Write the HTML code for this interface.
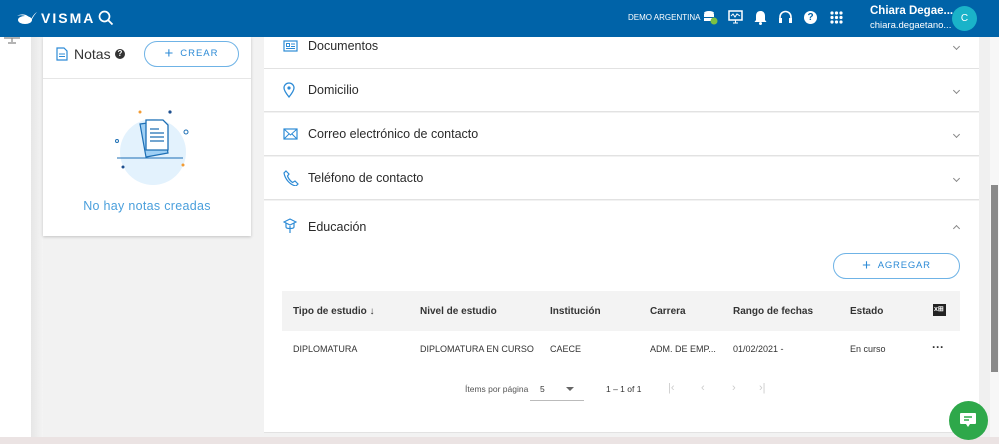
<!DOCTYPE html>
<html><head><meta charset="utf-8"><style>
*{box-sizing:border-box;margin:0;padding:0}
body{width:999px;height:444px;overflow:hidden;position:relative;background:#f2f2f2;font-family:"Liberation Sans",sans-serif;color:#252525}
.hdr{position:absolute;left:0;top:0;width:999px;height:37px;background:#0063a8;color:#fff;z-index:5}
.abs{position:absolute}
.card{position:absolute;background:#fff}
.row{position:absolute;left:264px;width:715px;height:43px;background:#fff;border-bottom:1px solid #e2e2e2}
.row .t{position:absolute;left:44px;font-size:12.5px;color:#2a2a2a}
.row .ic{position:absolute;left:19px}
.chev{position:absolute;right:20px;width:5px;height:5px;border-right:1px solid #888;border-bottom:1px solid #888;transform:rotate(45deg)}
.th{position:absolute;top:306px;font-size:10px;font-weight:bold;color:#333}
.td{position:absolute;top:344px;font-size:9px;color:#333}
.pg{position:absolute;top:382px;font-size:11px;color:#ccc}
</style></head><body>
<div class="abs" style="left:0;top:37px;width:31px;height:407px;background:#fff"></div>
<div class="abs" style="left:31px;top:37px;width:12px;height:407px;background:linear-gradient(90deg,#e6e6e6,#f4f4f4)"></div>
<svg class="abs" style="left:3px;top:37px" width="18" height="8"><path d="M1 1h16M9 1v4M5 6h8" stroke="#888" stroke-width="1.2" fill="none"/></svg>

<div class="hdr">
 <svg class="abs" style="left:16px;top:10px" width="22" height="16"><path d="M1 6c6-2 10 0 14 5 2-4 4-7 6-9-3 2-5 5-6 8C12 4 6 3 1 6z" fill="#fff"/><ellipse cx="9" cy="10" rx="7" ry="4" fill="#fff"/></svg>
 <div class="abs" style="left:41px;top:10px;font-size:14px;font-weight:bold;letter-spacing:2px">VISMA</div>
 <svg class="abs" style="left:98px;top:10px" width="16" height="16"><circle cx="6.5" cy="6.5" r="5" stroke="#fff" stroke-width="1.7" fill="none"/><path d="M10 10l4.5 4.5" stroke="#fff" stroke-width="1.8"/></svg>
 <div class="abs" style="left:628px;top:13px;font-size:8px">DEMO ARGENTINA</div>
 <svg class="abs" style="left:703px;top:10px" width="15" height="15"><ellipse cx="6" cy="3" rx="5" ry="2" fill="#fff"/><rect x="1" y="4" width="10" height="3" fill="#fff"/><rect x="1" y="8" width="10" height="3" fill="#fff"/><circle cx="11" cy="11" r="3.5" fill="#7cc142"/></svg>
 <svg class="abs" style="left:728px;top:10px" width="15" height="15"><rect x="1" y="1" width="13" height="9" stroke="#fff" stroke-width="1.5" fill="none"/><path d="M3 6l2-2 2 3 2-3 3 2M5 13h5M7.5 10v3" stroke="#fff" fill="none"/></svg>
 <svg class="abs" style="left:754px;top:10px" width="13" height="15"><path d="M6.5 1c3 0 4.5 2 4.5 5v4l1.5 2h-12L2 10V6c0-3 1.5-5 4.5-5z" fill="#fff"/><circle cx="6.5" cy="13.5" r="1.5" fill="#fff"/></svg>
 <svg class="abs" style="left:778px;top:10px" width="15" height="15"><path d="M2 9V7a5.5 5.5 0 0 1 11 0v2" stroke="#fff" stroke-width="1.6" fill="none"/><rect x="1" y="8" width="3" height="5" fill="#fff"/><rect x="11" y="8" width="3" height="5" fill="#fff"/></svg>
 <div class="abs" style="left:804px;top:11px;width:13px;height:13px;border-radius:50%;background:#fff;color:#0063a8;font-size:10px;font-weight:bold;text-align:center;line-height:13px">?</div>
 <svg class="abs" style="left:830px;top:11px" width="13" height="13"><g fill="#fff"><circle cx="2" cy="2" r="1.6"/><circle cx="6.5" cy="2" r="1.6"/><circle cx="11" cy="2" r="1.6"/><circle cx="2" cy="6.5" r="1.6"/><circle cx="6.5" cy="6.5" r="1.6"/><circle cx="11" cy="6.5" r="1.6"/><circle cx="2" cy="11" r="1.6"/><circle cx="6.5" cy="11" r="1.6"/><circle cx="11" cy="11" r="1.6"/></g></svg>
 <div class="abs" style="left:870px;top:5px;font-size:11.5px;font-weight:bold;white-space:nowrap">Chiara Degae...</div>
 <div class="abs" style="left:870px;top:20px;font-size:9.5px;white-space:nowrap">chiara.degaetano...</div>
 <div class="abs" style="left:952px;top:6px;width:25px;height:25px;border-radius:50%;background:#1ab3c9;font-size:10px;text-align:center;line-height:25px">C</div>
</div>

<div class="card" style="left:43px;top:37px;width:208px;height:199px;box-shadow:0 1px 3px rgba(0,0,0,.2)">
 <div class="abs" style="left:0;top:41px;width:208px;height:1px;background:#e6e6e6"></div>
 <svg class="abs" style="left:13px;top:10px" width="12" height="14"><path d="M1 1h7l3 3v9H1z" stroke="#2d8bd6" stroke-width="1.2" fill="none"/><path d="M3 7h6M3 9.5h6" stroke="#2d8bd6"/></svg>
 <div class="abs" style="left:31px;top:9px;font-size:14px;color:#333">Notas</div>
 <div class="abs" style="left:72px;top:12px;width:10px;height:10px;border-radius:50%;background:#333;color:#fff;font-size:8px;font-weight:bold;text-align:center;line-height:10px">?</div>
 <div class="abs" style="left:101px;top:4px;width:95px;height:26px;border:1px solid #6fb3e6;border-radius:13px;color:#2d8bd6;font-size:9.5px;letter-spacing:1px;text-align:center;line-height:24px"><span style="font-size:15px;vertical-align:-2px;margin-right:6px">+</span>CREAR</div>
 <svg class="abs" style="left:70px;top:70px" width="78" height="80">
  <circle cx="40" cy="45" r="33" fill="#e3f2fd"/>
  <path d="M27 17l22 -3 6 32 -22 4z" fill="#9fd0f5" stroke="#1d6fb5" stroke-width="1.2"/>
  <path d="M33 13h17l5 5v25H33z" fill="#fff" stroke="#1d6fb5" stroke-width="1.3"/>
  <path d="M37 22h9M37 26h14M37 30h14M37 34h14" stroke="#1d6fb5" stroke-width="1.2"/>
  <path d="M4 51h66" stroke="#1d6fb5" stroke-width="1"/>
  <circle cx="27" cy="5" r="1.5" fill="#f39c33"/><circle cx="57" cy="5" r="1.6" fill="#1d4f8f"/><circle cx="73" cy="25" r="2" stroke="#1d6fb5" fill="none"/><circle cx="4" cy="34" r="1.5" stroke="#1d6fb5" fill="none"/><circle cx="10" cy="60" r="1.5" fill="#1d4f8f"/><circle cx="70" cy="58" r="1.5" fill="#f39c33"/>
 </svg>
 <div class="abs" style="left:0;top:162px;width:208px;text-align:center;font-size:12.5px;color:#4a9fdc;letter-spacing:.3px">No hay notas creadas</div>
</div>

<div class="row" style="top:37px;height:32px"><svg class="ic" style="top:3px" width="15" height="12"><rect x="1" y="1" width="13" height="10" stroke="#2d8bd6" stroke-width="1.2" fill="none"/><rect x="3.5" y="3.5" width="3" height="3" stroke="#2d8bd6" fill="none"/><path d="M8 4h4M8 6.5h4M3 8.5h9" stroke="#2d8bd6"/></svg><div class="t" style="top:2px">Documentos</div><div class="chev" style="top:7px"></div></div>
<div class="row" style="top:69px"><svg class="ic" style="top:13px" width="12" height="16"><path d="M6 15C2 10 1 8 1 6a5 5 0 0 1 10 0c0 2-1 4-5 9z" stroke="#2d8bd6" stroke-width="1.3" fill="none"/><circle cx="6" cy="6" r="1.6" fill="#2d8bd6"/></svg><div class="t" style="top:14px">Domicilio</div><div class="chev" style="top:19px"></div></div>
<div class="row" style="top:113px"><svg class="ic" style="top:15px" width="15" height="12"><rect x="1" y="1" width="13" height="10" stroke="#2d8bd6" stroke-width="1.2" fill="none"/><path d="M1 1l6.5 6L14 1M1 11l5-5M14 11l-5-5" stroke="#2d8bd6" fill="none"/></svg><div class="t" style="top:14px">Correo electrónico de contacto</div><div class="chev" style="top:19px"></div></div>
<div class="row" style="top:157px"><svg class="ic" style="top:13px" width="16" height="16"><path d="M3 1l3 3-1.5 2c1 3 3 5 5 6.5L12 11l3 3-2 2C7 15 2 9 1 3z" stroke="#2d8bd6" stroke-width="1.2" fill="none"/></svg><div class="t" style="top:14px">Teléfono de contacto</div><div class="chev" style="top:19px"></div></div>
<div class="abs" style="left:264px;top:201px;width:715px;height:232px;background:#fff;border-bottom:1px solid #e2e2e2">
 <svg class="abs" style="left:19px;top:17px" width="14" height="16"><path d="M1 4l6-3 6 3-6 3z" stroke="#2d8bd6" stroke-width="1.2" fill="none"/><path d="M3 5v4c0 2 8 2 8 0V5M7 8v7" stroke="#2d8bd6" stroke-width="1.2" fill="none"/></svg>
 <div class="abs" style="left:44px;top:19px;font-size:12.5px;color:#2a2a2a">Educación</div>
 <div class="chev" style="top:25px;transform:rotate(225deg)"></div>
 <div class="abs" style="left:569px;top:52px;width:127px;height:26px;border:1px solid #6fb3e6;border-radius:13px;color:#2d8bd6;font-size:9.5px;letter-spacing:.8px;text-align:center;line-height:24px"><span style="font-size:15px;vertical-align:-2px;margin-right:6px">+</span>AGREGAR</div>
 <div class="abs" style="left:18px;top:90px;width:678px;height:40px;background:#f3f3f3"></div>
</div>
<div class="th" style="left:293px">Tipo de estudio ↓</div>
<div class="th" style="left:420px">Nivel de estudio</div>
<div class="th" style="left:550px">Institución</div>
<div class="th" style="left:650px">Carrera</div>
<div class="th" style="left:733px">Rango de fechas</div>
<div class="th" style="left:850px">Estado</div>
<div class="abs" style="left:933px;top:304px;width:13px;height:12px;background:#222;color:#fff;font-size:7px;font-weight:bold;line-height:12px;padding-left:1px">x⊞</div>
<div class="td" style="left:293px">DIPLOMATURA</div>
<div class="td" style="left:420px">DIPLOMATURA EN CURSO</div>
<div class="td" style="left:550px">CAECE</div>
<div class="td" style="left:650px">ADM. DE EMP...</div>
<div class="td" style="left:733px">01/02/2021 -</div>
<div class="td" style="left:850px">En curso</div>
<div class="abs" style="left:932px;top:340px;font-size:12px;font-weight:bold;color:#333">···</div>
<div class="abs" style="left:465px;top:384px;font-size:8.5px;color:#555">Ítems por página</div>
<div class="abs" style="left:540px;top:384px;font-size:8.5px;color:#333">5</div>
<div class="abs" style="left:566px;top:387px;border:4px solid transparent;border-top:4px solid #666"></div>
<div class="abs" style="left:530px;top:400px;width:54px;height:1px;background:#bbb"></div>
<div class="abs" style="left:606px;top:384px;font-size:8.5px;color:#333">1 – 1 of 1</div>
<div class="pg" style="left:668px">|‹</div>
<div class="pg" style="left:701px">‹</div>
<div class="pg" style="left:732px">›</div>
<div class="pg" style="left:759px">›|</div>

<div class="abs" style="left:979px;top:37px;width:11px;height:400px;background:#f0f0f0"></div>
<div class="abs" style="left:990px;top:37px;width:9px;height:407px;background:#f7f7f7"></div>
<div class="abs" style="left:991px;top:185px;width:7px;height:187px;background:#8a8a8a"></div>
<div class="abs" style="left:0;top:437px;width:999px;height:7px;background:#ebe3e3"></div>
<div class="abs" style="left:949px;top:401px;width:39px;height:39px;border-radius:50%;background:#2ea84a"></div>
<svg class="abs" style="left:958px;top:411px" width="20" height="20"><path d="M3 2h14a1 1 0 0 1 1 1v9a1 1 0 0 1-1 1h-5l-2 3-2-3H3a1 1 0 0 1-1-1V3a1 1 0 0 1 1-1z" fill="#fff"/><path d="M6 6h8M6 9h5" stroke="#2ea84a" stroke-width="1.5"/></svg>
</body></html>
